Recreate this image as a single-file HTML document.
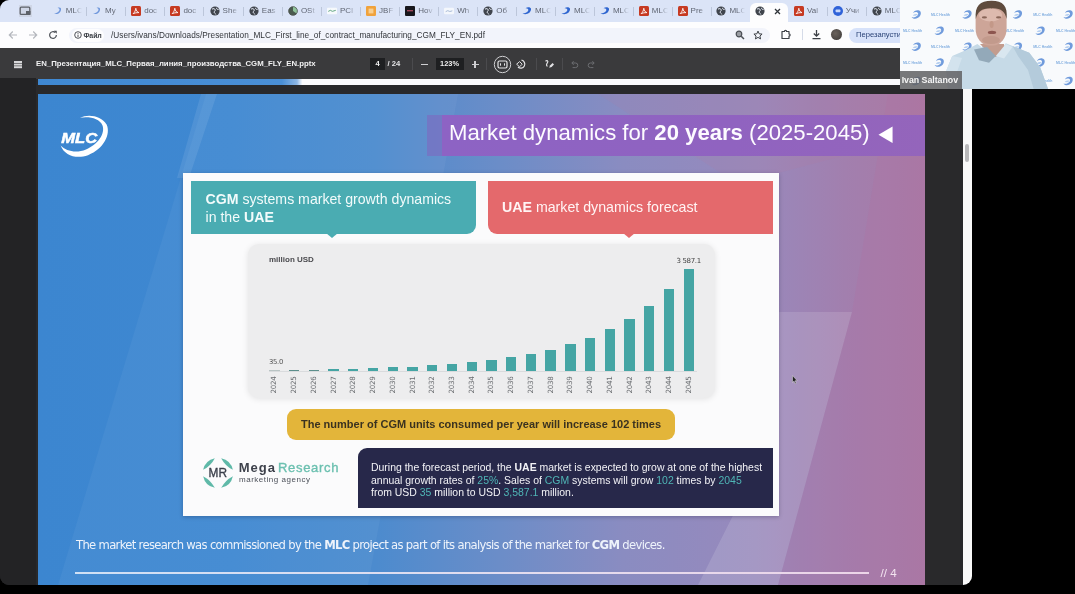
<!DOCTYPE html>
<html lang="en">
<head>
<meta charset="utf-8">
<title>Market dynamics for 20 years</title>
<style>
*{box-sizing:border-box;margin:0;padding:0}
html,body{width:1075px;height:594px;overflow:hidden;background:#000;font-family:"Liberation Sans",sans-serif}
#root{position:relative;width:1075px;height:594px;overflow:hidden;background:#000}
.a{position:absolute}
#win{filter:blur(.5px);position:absolute;left:0;top:0;width:972px;height:585px;background:#29292b;border-radius:9px 0 9px 9px;overflow:hidden}
#tabbar{position:absolute;left:0;top:0;width:972px;height:22px;background:#dbe4f7}
#addr{position:absolute;left:0;top:22px;width:972px;height:26px;background:#fdfdfe}
#pdfbar{position:absolute;left:0;top:48.2px;width:972px;height:30.6px;background:#3a3a3c}
.tab{position:absolute;top:0;height:22px;width:39px}
.tab .ico{position:absolute;left:-5px;top:6px;width:10px;height:10px}
.tab .lbl{position:absolute;left:8px;top:5.5px;font-size:8px;line-height:10px;color:#5f6572;width:16px;overflow:hidden;white-space:nowrap;-webkit-mask-image:linear-gradient(90deg,#000 50%,transparent 100%);mask-image:linear-gradient(90deg,#000 50%,transparent 100%)}
.tab .sep{position:absolute;left:28px;top:7px;width:1px;height:9px;background:#bcc6da}
#slide{position:absolute;left:38px;top:94px;width:887px;height:491px;overflow:hidden;background:linear-gradient(90deg,#3c86d0 0%,#3f88d1 22%,#4c8bce 38%,#6b8dc8 52%,#8a8cc1 66%,#9889bc 81%,#a27fae 91%,#a87aa6 100%)}
#card{position:absolute;left:145px;top:79px;width:596px;height:343px;background:#fbfbfc;box-shadow:0 1px 4px rgba(0,0,30,.25)}
.w{color:#fff}

#cam{filter:blur(.5px);position:absolute;left:899.7px;top:0;width:175.3px;height:88.7px;background:#f8fafc;overflow:hidden}
.yr{overflow:visible}
.yr span{position:absolute;left:10px;top:9px;transform:translate(-50%,-50%) rotate(-90deg);font-size:7.2px;line-height:8px;color:#6a6d71;white-space:nowrap;font-family:"DejaVu Sans","Liberation Sans",sans-serif;letter-spacing:-.3px}
i.t{font-style:normal;color:#4fb6b6}
</style>
</head>
<body>
<div id="root">
<div id="win">
<div id="tabbar">
<svg class="a" style="left:19px;top:5px;width:13px;height:12px" viewBox="0 0 13 12"><rect x="0" y="0" width="25" height="12" rx="4" fill="#cfd6e6" transform="translate(-6 0)"/><rect x="1.2" y="2.2" width="9.6" height="7.2" rx="1" fill="none" stroke="#5d6168" stroke-width="1.3"/><rect x="7" y="6" width="4.5" height="4" fill="#5d6168"/></svg>
<div class="tab" style="left:57.8px"><svg class="ico" viewBox="0 0 10 10"><path d="M1 7.5C4 9 8.5 7 8 2.5C7.5 1.5 6 1.2 4.5 2C6.5 2 7 3.5 6 5C5 6.5 3 7.5 1 7.5Z" fill="#6f97dc"/></svg><div class="lbl">MLC</div><div class="sep"></div></div>
<div class="tab" style="left:97.0px"><svg class="ico" viewBox="0 0 10 10"><path d="M1 7.5C4 9 8.5 7 8 2.5C7.5 1.5 6 1.2 4.5 2C6.5 2 7 3.5 6 5C5 6.5 3 7.5 1 7.5Z" fill="#6f97dc"/></svg><div class="lbl">My</div><div class="sep"></div></div>
<div class="tab" style="left:136.2px"><svg class="ico" viewBox="0 0 10 10"><rect x="0" y="0" width="10" height="10" rx="1.5" fill="#c63a22"/><path d="M2.2 7.6C3.6 6.4 4.6 4.4 4.8 2.3C5.2 4.6 6.2 6 7.9 6.6C5.8 6.5 3.8 6.9 2.2 7.6Z" fill="none" stroke="#fff" stroke-width="0.9"/></svg><div class="lbl">doc</div><div class="sep"></div></div>
<div class="tab" style="left:175.4px"><svg class="ico" viewBox="0 0 10 10"><rect x="0" y="0" width="10" height="10" rx="1.5" fill="#c63a22"/><path d="M2.2 7.6C3.6 6.4 4.6 4.4 4.8 2.3C5.2 4.6 6.2 6 7.9 6.6C5.8 6.5 3.8 6.9 2.2 7.6Z" fill="none" stroke="#fff" stroke-width="0.9"/></svg><div class="lbl">doc</div><div class="sep"></div></div>
<div class="tab" style="left:214.6px"><svg class="ico" viewBox="0 0 10 10"><circle cx="5" cy="5" r="4.6" fill="#40454d"/><path d="M2 3.2C3.5 2.2 4.8 2.6 5.2 3.8C5.5 5 4 5.2 4.2 6.4C4.4 7.4 5.6 7.2 5.8 8.4" fill="none" stroke="#e8edf7" stroke-width="1"/><path d="M6.6 1.8C6.2 3 7.4 3.6 8.6 3.4" fill="none" stroke="#e8edf7" stroke-width="1"/></svg><div class="lbl">She</div><div class="sep"></div></div>
<div class="tab" style="left:253.8px"><svg class="ico" viewBox="0 0 10 10"><circle cx="5" cy="5" r="4.6" fill="#40454d"/><path d="M2 3.2C3.5 2.2 4.8 2.6 5.2 3.8C5.5 5 4 5.2 4.2 6.4C4.4 7.4 5.6 7.2 5.8 8.4" fill="none" stroke="#e8edf7" stroke-width="1"/><path d="M6.6 1.8C6.2 3 7.4 3.6 8.6 3.4" fill="none" stroke="#e8edf7" stroke-width="1"/></svg><div class="lbl">Eas</div><div class="sep"></div></div>
<div class="tab" style="left:292.9px"><svg class="ico" viewBox="0 0 10 10"><circle cx="5" cy="5" r="4.6" fill="#4a5a4e"/><path d="M5 5L5 0.6A4.4 4.4 0 0 1 8.6 7.4Z" fill="#8fc39a"/><circle cx="5" cy="5" r="4.3" fill="none" stroke="#555" stroke-width=".6"/></svg><div class="lbl">OSt</div><div class="sep"></div></div>
<div class="tab" style="left:332.0px"><svg class="ico" viewBox="0 0 12 10"><rect x="0" y="1" width="12" height="8" rx="1" fill="#f6f9fc"/><path d="M1.5 5.5L4 4.2L6.5 5.4L10.5 4.2" stroke="#5aa27a" stroke-width="1.1" fill="none"/></svg><div class="lbl">PCI</div><div class="sep"></div></div>
<div class="tab" style="left:371.1px"><svg class="ico" viewBox="0 0 10 10"><rect x="0" y="0" width="10" height="10" rx="1.2" fill="#f0a23c"/><rect x="2.6" y="2.6" width="4.8" height="4.8" fill="#f9cf8e"/></svg><div class="lbl">JBF</div><div class="sep"></div></div>
<div class="tab" style="left:410.2px"><svg class="ico" viewBox="0 0 10 10"><rect x="0" y="0" width="10" height="10" rx="1" fill="#17171c"/><rect x="2" y="4" width="6" height="1.4" fill="#a0485a"/></svg><div class="lbl">Hov</div><div class="sep"></div></div>
<div class="tab" style="left:449.2px"><svg class="ico" viewBox="0 0 12 10"><rect x="0" y="1" width="12" height="8" rx="1.5" fill="#f4f7fc"/><path d="M2 5.8L4.5 4.6L7 5.6L10 4.8" stroke="#9ab0d0" stroke-width="1" fill="none"/></svg><div class="lbl">Wh</div><div class="sep"></div></div>
<div class="tab" style="left:488.2px"><svg class="ico" viewBox="0 0 10 10"><circle cx="5" cy="5" r="4.6" fill="#40454d"/><path d="M2 3.2C3.5 2.2 4.8 2.6 5.2 3.8C5.5 5 4 5.2 4.2 6.4C4.4 7.4 5.6 7.2 5.8 8.4" fill="none" stroke="#e8edf7" stroke-width="1"/><path d="M6.6 1.8C6.2 3 7.4 3.6 8.6 3.4" fill="none" stroke="#e8edf7" stroke-width="1"/></svg><div class="lbl">Об</div><div class="sep"></div></div>
<div class="tab" style="left:527.1px"><svg class="ico" viewBox="0 0 10 10"><path d="M0.5 7.5C4 9.5 9.5 7 9 2.5C8 1 5.5 0.8 3.5 2.2C6 2 7 3.5 6 5C5 6.5 3 7.5 0.5 7.5Z" fill="#2f66d0"/></svg><div class="lbl">MLC</div><div class="sep"></div></div>
<div class="tab" style="left:566.0px"><svg class="ico" viewBox="0 0 10 10"><path d="M0.5 7.5C4 9.5 9.5 7 9 2.5C8 1 5.5 0.8 3.5 2.2C6 2 7 3.5 6 5C5 6.5 3 7.5 0.5 7.5Z" fill="#2f66d0"/></svg><div class="lbl">MLC</div><div class="sep"></div></div>
<div class="tab" style="left:604.9px"><svg class="ico" viewBox="0 0 10 10"><path d="M0.5 7.5C4 9.5 9.5 7 9 2.5C8 1 5.5 0.8 3.5 2.2C6 2 7 3.5 6 5C5 6.5 3 7.5 0.5 7.5Z" fill="#2f66d0"/></svg><div class="lbl">MLC</div><div class="sep"></div></div>
<div class="tab" style="left:643.8px"><svg class="ico" viewBox="0 0 10 10"><rect x="0" y="0" width="10" height="10" rx="1.5" fill="#c63a22"/><path d="M2.2 7.6C3.6 6.4 4.6 4.4 4.8 2.3C5.2 4.6 6.2 6 7.9 6.6C5.8 6.5 3.8 6.9 2.2 7.6Z" fill="none" stroke="#fff" stroke-width="0.9"/></svg><div class="lbl">MLC</div><div class="sep"></div></div>
<div class="tab" style="left:682.6px"><svg class="ico" viewBox="0 0 10 10"><rect x="0" y="0" width="10" height="10" rx="1.5" fill="#c63a22"/><path d="M2.2 7.6C3.6 6.4 4.6 4.4 4.8 2.3C5.2 4.6 6.2 6 7.9 6.6C5.8 6.5 3.8 6.9 2.2 7.6Z" fill="none" stroke="#fff" stroke-width="0.9"/></svg><div class="lbl">Pre</div><div class="sep"></div></div>
<div class="tab" style="left:721.4px"><svg class="ico" viewBox="0 0 10 10"><circle cx="5" cy="5" r="4.6" fill="#40454d"/><path d="M2 3.2C3.5 2.2 4.8 2.6 5.2 3.8C5.5 5 4 5.2 4.2 6.4C4.4 7.4 5.6 7.2 5.8 8.4" fill="none" stroke="#e8edf7" stroke-width="1"/><path d="M6.6 1.8C6.2 3 7.4 3.6 8.6 3.4" fill="none" stroke="#e8edf7" stroke-width="1"/></svg><div class="lbl">MLC</div></div>
<div class="a" style="left:750.2px;top:2.5px;width:38px;height:20px;background:#fdfdfe;border-radius:6px 6px 0 0"></div>
<div class="tab" style="left:760.2px"><svg class="ico" viewBox="0 0 10 10"><circle cx="5" cy="5" r="4.6" fill="#40454d"/><path d="M2 3.2C3.5 2.2 4.8 2.6 5.2 3.8C5.5 5 4 5.2 4.2 6.4C4.4 7.4 5.6 7.2 5.8 8.4" fill="none" stroke="#e8edf7" stroke-width="1"/><path d="M6.6 1.8C6.2 3 7.4 3.6 8.6 3.4" fill="none" stroke="#e8edf7" stroke-width="1"/></svg><svg class="a" style="left:13.5px;top:7.5px;width:7px;height:7px" viewBox="0 0 7 7"><path d="M1 1L6 6M6 1L1 6" stroke="#30343a" stroke-width="1.3"/></svg></div>
<div class="tab" style="left:799.0px"><svg class="ico" viewBox="0 0 10 10"><rect x="0" y="0" width="10" height="10" rx="1.5" fill="#c63a22"/><path d="M2.2 7.6C3.6 6.4 4.6 4.4 4.8 2.3C5.2 4.6 6.2 6 7.9 6.6C5.8 6.5 3.8 6.9 2.2 7.6Z" fill="none" stroke="#fff" stroke-width="0.9"/></svg><div class="lbl">Val</div><div class="sep"></div></div>
<div class="tab" style="left:837.8px"><svg class="ico" viewBox="0 0 10 10"><circle cx="5" cy="5" r="5" fill="#2f62d8"/><rect x="2.6" y="3.6" width="4.8" height="2.6" rx=".6" fill="#c9d8fa"/></svg><div class="lbl">Учи</div><div class="sep"></div></div>
<div class="tab" style="left:876.8px"><svg class="ico" viewBox="0 0 10 10"><circle cx="5" cy="5" r="4.6" fill="#40454d"/><path d="M2 3.2C3.5 2.2 4.8 2.6 5.2 3.8C5.5 5 4 5.2 4.2 6.4C4.4 7.4 5.6 7.2 5.8 8.4" fill="none" stroke="#e8edf7" stroke-width="1"/><path d="M6.6 1.8C6.2 3 7.4 3.6 8.6 3.4" fill="none" stroke="#e8edf7" stroke-width="1"/></svg><div class="lbl">MLC</div><div class="sep"></div></div>
</div>
<div id="addr">
<svg class="a" style="left:8px;top:8px;width:10px;height:10px" viewBox="0 0 10 10"><path d="M9 5H1.5M4.8 1.5L1.3 5L4.8 8.5" fill="none" stroke="#b5b8be" stroke-width="1.2"/></svg>
<svg class="a" style="left:28px;top:8px;width:10px;height:10px" viewBox="0 0 10 10"><path d="M1 5H8.5M5.2 1.5L8.7 5L5.2 8.5" fill="none" stroke="#b5b8be" stroke-width="1.2"/></svg>
<svg class="a" style="left:48px;top:8px;width:10px;height:10px" viewBox="0 0 11 11"><path d="M9.2 5.5A3.7 3.7 0 1 1 7.9 2.7" fill="none" stroke="#4b4f55" stroke-width="1.3"/><path d="M6.4 0.8H9.6V4Z" fill="#4b4f55"/></svg>
<div class="a" style="left:69px;top:5.5px;width:701px;height:15px;border-radius:8px;background:#f2f4fb"></div>
<div class="a" style="left:72px;top:6.5px;width:32px;height:13px;border-radius:7px;background:#fdfdfe"></div>
<svg class="a" style="left:73.5px;top:9px;width:8px;height:8px" viewBox="0 0 8 8"><circle cx="4" cy="4" r="3.3" fill="none" stroke="#3c4046" stroke-width=".9"/><path d="M4 3.6V6M4 2V2.8" stroke="#3c4046" stroke-width=".9"/></svg>
<div class="a" style="left:83.5px;top:8.5px;font-size:7px;line-height:9px;font-weight:bold;color:#3c4046;letter-spacing:-.1px">Файл</div>
<div class="a" id="url" style="left:111px;top:7.5px;font-size:8.25px;line-height:11px;color:#33363b;white-space:nowrap;letter-spacing:.02px">/Users/ivans/Downloads/Presentation_MLC_First_line_of_contract_manufacturing_CGM_FLY_EN.pdf</div>
<svg class="a" style="left:735px;top:8px;width:10px;height:10px" viewBox="0 0 10 10"><circle cx="4" cy="4" r="2.8" fill="#9a9da3" stroke="#4b4f55" stroke-width="1.2"/><path d="M6.2 6.2L9 9" stroke="#4b4f55" stroke-width="1.5"/></svg>
<svg class="a" style="left:752.8px;top:7.8px;width:10px;height:10px" viewBox="0 0 11 11"><path d="M5.5 1.2L6.8 4.2L10 4.5L7.6 6.6L8.3 9.8L5.5 8.1L2.7 9.8L3.4 6.6L1 4.5L4.2 4.2Z" fill="none" stroke="#3c4046" stroke-width="1.1" stroke-linejoin="round"/></svg>
<svg class="a" style="left:780px;top:7px;width:11px;height:11px" viewBox="0 0 11 11"><path d="M2 2.5H4.5C4.3 1 6.7 1 6.5 2.5H9V5C10.4 4.8 10.4 7.2 9 7V9.5H2Z" fill="none" stroke="#3c4046" stroke-width="1.2" stroke-linejoin="round"/></svg>
<div class="a" style="left:802px;top:7px;width:1px;height:11px;background:#d5dbe8"></div>
<svg class="a" style="left:811px;top:7px;width:11px;height:11px" viewBox="0 0 11 11"><path d="M5.5 1V7M2.8 4.5L5.5 7.2L8.2 4.5M1.5 9.6H9.5" fill="none" stroke="#3c4046" stroke-width="1.3"/></svg>
<div class="a" style="left:830.5px;top:7px;width:11px;height:11px;border-radius:50%;background:radial-gradient(circle at 40% 40%,#6a625c,#3c3937)"></div>
<div class="a" style="left:849px;top:5.5px;width:80px;height:15px;border-radius:8px;background:#d7e2fa"></div>
<div class="a" style="left:856px;top:8px;font-size:7.6px;line-height:10px;color:#2b4377;white-space:nowrap">Перезапустить</div>
</div>
<div id="pdfbar"><div class="a" style="left:0;top:1.3px;width:972px;height:30px">
<div class="a" style="left:14px;top:12px;width:8px;height:1.4px;background:#d8d8da;box-shadow:0 2.6px 0 #d8d8da,0 5.2px 0 #d8d8da"></div>
<div class="a w" id="ptitle" style="left:36px;top:10px;font-size:7.79px;line-height:10px;font-weight:bold;color:#f1f1f2;white-space:nowrap">EN_Презентация_MLC_Первая_линия_производства_CGM_FLY_EN.pptx</div>
<div class="a" style="left:370px;top:9px;width:15px;height:12px;background:#1e1f21"></div>
<div class="a w" style="left:370px;top:10px;width:15px;text-align:center;font-size:7.6px;line-height:10px;font-weight:bold;color:#eee">4</div>
<div class="a w" style="left:387.5px;top:10px;font-size:7.6px;line-height:10px;font-weight:bold;color:#e4e4e6;white-space:nowrap">/ 24</div>
<div class="a" style="left:412px;top:9px;width:1px;height:12px;background:#4b4b4e"></div>
<div class="a" style="left:421px;top:14.4px;width:7px;height:1.2px;background:#cfcfd2"></div>
<div class="a" style="left:435.5px;top:9px;width:28px;height:12px;background:#1e1f21"></div>
<div class="a w" style="left:435.5px;top:10px;width:28px;text-align:center;font-size:7.4px;line-height:10px;font-weight:bold;color:#eee">123%</div>
<div class="a" style="left:471.5px;top:14.4px;width:7px;height:1.2px;background:#cfcfd2"></div><div class="a" style="left:474.4px;top:11.5px;width:1.2px;height:7px;background:#cfcfd2"></div>
<div class="a" style="left:486px;top:9px;width:1px;height:12px;background:#4b4b4e"></div>
<svg class="a" style="left:492.5px;top:5.5px;width:19px;height:19px" viewBox="0 0 19 19"><circle cx="9.5" cy="9.5" r="8.2" fill="none" stroke="#cfcfd2" stroke-width="1"/><rect x="5" y="6" width="9" height="7" rx="1.4" fill="none" stroke="#e4e4e6" stroke-width="1.2"/><path d="M7.5 8.3V10.7M11.5 8.3V10.7" stroke="#e4e4e6" stroke-width="1"/></svg>
<svg class="a" style="left:514.5px;top:9px;width:12px;height:12px" viewBox="0 0 12 12"><path d="M6.5 2.2A4 4 0 1 1 3 9" fill="none" stroke="#e0e0e2" stroke-width="1.2"/><path d="M4.6 3.6L1.6 6.2L4.6 8.8L7.2 6.2Z" fill="none" stroke="#e0e0e2" stroke-width="1"/></svg>
<div class="a" style="left:536px;top:9px;width:1px;height:12px;background:#4b4b4e"></div>
<svg class="a" style="left:544px;top:9.5px;width:11px;height:11px" viewBox="0 0 11 11"><path d="M1.5 2.2C3 .8 4.6 2 3.4 3.8C2.4 5.4 2 7 3.6 7.2" fill="none" stroke="#e2e2e4" stroke-width="1.2"/><path d="M5.2 8.8L6 6.4L8.6 4L10 5.4L7.6 8Z" fill="#e2e2e4"/></svg>
<div class="a" style="left:562px;top:9px;width:1px;height:12px;background:#4b4b4e"></div>
<svg class="a" style="left:570px;top:10.5px;width:9px;height:9px" viewBox="0 0 9 9"><path d="M2 3H5.5A2.2 2.2 0 0 1 5.5 7.6H2.6M3.6 1.2L1.8 3L3.6 4.8" fill="none" stroke="#6d6e72" stroke-width="1"/></svg>
<svg class="a" style="left:587px;top:10.5px;width:9px;height:9px" viewBox="0 0 9 9"><path d="M7 3H3.5A2.2 2.2 0 0 0 3.5 7.6H6.4M5.4 1.2L7.2 3L5.4 4.8" fill="none" stroke="#6d6e72" stroke-width="1"/></svg>
</div></div>
<div class="a" style="left:0;top:78px;width:36px;height:507px;background:#232325"></div>
<div class="a" style="left:38px;top:79.2px;width:887px;height:5.5px;background:linear-gradient(90deg,#3f88d2 0,#4a8fd6 27.5%,#8db6e4 29.2%,#fbfbfd 29.8%)"></div>
<div class="a" style="left:962.5px;top:78px;width:9.5px;height:507px;background:#fafafa"></div>
<div class="a" style="left:964.5px;top:143.5px;width:4.6px;height:18.5px;border-radius:2px;background:#b9b9bb"></div>
<div id="slide">
<svg class="a" style="left:0;top:0;width:887px;height:491px" viewBox="0 0 887 491" preserveAspectRatio="none"><polygon points="168,0 420,0 330,491 20,491" fill="#fff" opacity=".045"/><polygon points="163,0 179,0 151,84 139,84" fill="#fff" opacity=".09"/><polygon points="850,0 887,0 887,491 740,491 814,218" fill="#b26c9e" opacity=".2"/><polygon points="741,218 814,218 740,491 660,491 741,330" fill="#fff" opacity=".13"/><polygon points="560,0 887,0 887,40 700,90" fill="#c07890" opacity=".10"/></svg>
<svg class="a" style="left:20px;top:18px;width:54px;height:48px" viewBox="0 0 54 48"><path d="M22 5.8C30 1.6 43.5 3.6 48.6 12.6C53 22 46 37 30 43.2C18 47.4 6.5 43.4 2.6 33.4C8 39 18 41.5 28 37.4C40 32.4 47.6 21.6 44.4 13.2C41.4 6.4 31 4 22 5.8Z" fill="#fff"/><text x="3.2" y="31" font-family="Liberation Sans, sans-serif" font-size="14.6" font-weight="bold" font-style="italic" fill="#fff" stroke="#fff" stroke-width=".5" textLength="36" lengthAdjust="spacingAndGlyphs">MLC</text></svg>
<div class="a" style="left:388.5px;top:21.1px;width:15.5px;height:41.4px;background:#7476c4;opacity:.9"></div>
<div class="a" style="left:403.8px;top:21.1px;width:484px;height:41.4px;background:linear-gradient(90deg,#8d63c4,#9063c0 60%,#9465bb)"></div>
<div class="a w" id="title" style="left:411px;top:25px;font-size:22.14px;line-height:27px;white-space:nowrap;color:#fdfbff">Market dynamics for <b>20 years</b> (2025-2045)</div>
<svg class="a" style="left:840.3px;top:31.5px;width:15px;height:17.5px" viewBox="0 0 16 18" preserveAspectRatio="none"><path d="M15.5 .5V17.5L.5 9Z" fill="#fff"/></svg>
<div id="card">
<div class="a" style="left:7.5px;top:8px;width:285px;height:52.5px;background:#4aacb2;border-radius:0 0 9px 0"></div>
<div class="a" style="left:143px;top:60px;width:0;height:0;border-left:6px solid transparent;border-right:6px solid transparent;border-top:5.5px solid #4aacb2"></div>
<div class="a w" id="t1" style="left:22.5px;top:18px;font-size:14.13px;line-height:17.5px;white-space:nowrap;color:#f2fbfb"><b>CGM</b> systems market growth dynamics<br>in the <b>UAE</b></div>
<div class="a" style="left:304.5px;top:8px;width:285px;height:52.5px;background:#e4696c;border-radius:0 0 0 9px"></div>
<div class="a" style="left:440px;top:60px;width:0;height:0;border-left:6px solid transparent;border-right:6px solid transparent;border-top:5.5px solid #e4696c"></div>
<div class="a w" id="t2" style="left:319px;top:26px;font-size:14.2px;line-height:17.5px;white-space:nowrap;color:#fff4f4"><b>UAE</b> market dynamics forecast</div>
<div class="a" style="left:64.5px;top:70.5px;width:467.5px;height:154px;border-radius:11px;background:#ededee;box-shadow:0 1px 6px rgba(0,0,0,.10)"></div>
<div class="a" style="left:86px;top:82px;font-size:8px;line-height:10px;font-weight:bold;color:#4a4a4e;white-space:nowrap">million USD</div>
<div class="a" style="left:86px;top:185.3px;font-size:6.8px;line-height:9px;color:#555;white-space:nowrap;font-family:'DejaVu Sans','Liberation Sans',sans-serif;letter-spacing:-.3px">35.0</div>
<div class="a" style="left:493.5px;top:83.5px;font-size:7px;line-height:9px;color:#444;white-space:nowrap;font-family:'DejaVu Sans','Liberation Sans',sans-serif;letter-spacing:-.35px">3 587.1</div>
<div class="a" style="left:86px;top:197.8px;width:428px;height:1px;background:#d9dbdd"></div>
<div class="a" style="left:86.2px;top:197.1px;width:10.4px;height:0.9px;background:#b9c4c4"></div>
<div class="a yr" style="left:81.4px;top:203px;width:20px;height:17px"><span>2024</span></div>
<div class="a" style="left:105.9px;top:196.8px;width:10.4px;height:1.2px;background:#5d8f8c"></div>
<div class="a yr" style="left:101.1px;top:203px;width:20px;height:17px"><span>2025</span></div>
<div class="a" style="left:125.7px;top:196.5px;width:10.4px;height:1.5px;background:#5d8f8c"></div>
<div class="a yr" style="left:120.9px;top:203px;width:20px;height:17px"><span>2026</span></div>
<div class="a" style="left:145.4px;top:196.2px;width:10.4px;height:1.8px;background:#45a5a4"></div>
<div class="a yr" style="left:140.6px;top:203px;width:20px;height:17px"><span>2027</span></div>
<div class="a" style="left:165.1px;top:195.7px;width:10.4px;height:2.3px;background:#45a5a4"></div>
<div class="a yr" style="left:160.3px;top:203px;width:20px;height:17px"><span>2028</span></div>
<div class="a" style="left:184.9px;top:195.1px;width:10.4px;height:2.9px;background:#45a5a4"></div>
<div class="a yr" style="left:180.1px;top:203px;width:20px;height:17px"><span>2029</span></div>
<div class="a" style="left:204.6px;top:194.4px;width:10.4px;height:3.6px;background:#45a5a4"></div>
<div class="a yr" style="left:199.8px;top:203px;width:20px;height:17px"><span>2030</span></div>
<div class="a" style="left:224.3px;top:193.5px;width:10.4px;height:4.5px;background:#45a5a4"></div>
<div class="a yr" style="left:219.5px;top:203px;width:20px;height:17px"><span>2031</span></div>
<div class="a" style="left:244.0px;top:192.4px;width:10.4px;height:5.6px;background:#45a5a4"></div>
<div class="a yr" style="left:239.2px;top:203px;width:20px;height:17px"><span>2032</span></div>
<div class="a" style="left:263.8px;top:191.0px;width:10.4px;height:7.0px;background:#45a5a4"></div>
<div class="a yr" style="left:259.0px;top:203px;width:20px;height:17px"><span>2033</span></div>
<div class="a" style="left:283.5px;top:189.2px;width:10.4px;height:8.8px;background:#45a5a4"></div>
<div class="a yr" style="left:278.7px;top:203px;width:20px;height:17px"><span>2034</span></div>
<div class="a" style="left:303.2px;top:187.0px;width:10.4px;height:11.0px;background:#45a5a4"></div>
<div class="a yr" style="left:298.4px;top:203px;width:20px;height:17px"><span>2035</span></div>
<div class="a" style="left:323.0px;top:184.3px;width:10.4px;height:13.7px;background:#45a5a4"></div>
<div class="a yr" style="left:318.2px;top:203px;width:20px;height:17px"><span>2036</span></div>
<div class="a" style="left:342.7px;top:180.9px;width:10.4px;height:17.1px;background:#45a5a4"></div>
<div class="a yr" style="left:337.9px;top:203px;width:20px;height:17px"><span>2037</span></div>
<div class="a" style="left:362.4px;top:176.6px;width:10.4px;height:21.4px;background:#45a5a4"></div>
<div class="a yr" style="left:357.6px;top:203px;width:20px;height:17px"><span>2038</span></div>
<div class="a" style="left:382.2px;top:171.2px;width:10.4px;height:26.8px;background:#45a5a4"></div>
<div class="a yr" style="left:377.4px;top:203px;width:20px;height:17px"><span>2039</span></div>
<div class="a" style="left:401.9px;top:164.5px;width:10.4px;height:33.5px;background:#45a5a4"></div>
<div class="a yr" style="left:397.1px;top:203px;width:20px;height:17px"><span>2040</span></div>
<div class="a" style="left:421.6px;top:156.1px;width:10.4px;height:41.9px;background:#45a5a4"></div>
<div class="a yr" style="left:416.8px;top:203px;width:20px;height:17px"><span>2041</span></div>
<div class="a" style="left:441.3px;top:145.7px;width:10.4px;height:52.3px;background:#45a5a4"></div>
<div class="a yr" style="left:436.5px;top:203px;width:20px;height:17px"><span>2042</span></div>
<div class="a" style="left:461.1px;top:132.6px;width:10.4px;height:65.4px;background:#45a5a4"></div>
<div class="a yr" style="left:456.3px;top:203px;width:20px;height:17px"><span>2043</span></div>
<div class="a" style="left:480.8px;top:116.2px;width:10.4px;height:81.8px;background:#45a5a4"></div>
<div class="a yr" style="left:476.0px;top:203px;width:20px;height:17px"><span>2044</span></div>
<div class="a" style="left:500.5px;top:95.8px;width:10.4px;height:102.2px;background:#45a5a4"></div>
<div class="a yr" style="left:495.7px;top:203px;width:20px;height:17px"><span>2045</span></div>
<div class="a" style="left:104px;top:236px;width:388px;height:30.5px;border-radius:9px;background:#e3b53a"></div>
<div class="a" id="yb" style="left:118px;top:245px;font-size:11.0px;line-height:13px;font-weight:bold;color:#3a3220;white-space:nowrap">The number of CGM units consumed per year will increase 102 times</div>
<svg class="a" style="left:17.6px;top:282.9px;width:34px;height:34px" viewBox="0 0 34 34"><g fill="#5fb9a8"><path d="M31.87 20.16A15.2 15.2 0 0 1 20.16 31.87Q24.21 24.21 31.87 20.16Z"/><path d="M13.84 31.87A15.2 15.2 0 0 1 2.13 20.16Q9.79 24.21 13.84 31.87Z"/><path d="M2.13 13.84A15.2 15.2 0 0 1 13.84 2.13Q9.79 9.79 2.13 13.84Z"/><path d="M20.16 2.13A15.2 15.2 0 0 1 31.87 13.84Q24.21 9.79 20.16 2.13Z"/></g><text x="7.6" y="21.2" font-family="Liberation Sans, sans-serif" font-size="13" fill="#3a3f4a" stroke="#3a3f4a" stroke-width=".35" textLength="18.4" lengthAdjust="spacingAndGlyphs">MR</text></svg>
<div class="a" id="mega" style="left:55.8px;top:286.9px;font-size:13px;line-height:15px;color:#3d414b;white-space:nowrap"><span style="font-weight:bold;letter-spacing:.95px">Mega</span><span style="color:#6cc0b0;margin-left:2.2px;letter-spacing:.68px;-webkit-text-stroke:.35px #6cc0b0">Research</span></div>
<div class="a" id="mka" style="left:56px;top:301.8px;font-size:8px;line-height:10px;color:#4d515a;white-space:nowrap;letter-spacing:.52px">marketing agency</div>
<div class="a" style="left:175px;top:275px;width:414.5px;height:60px;background:#27284a;border-radius:9px 0 0 0"></div>
<div class="a w" id="dk" style="left:188px;top:289.3px;font-size:10.46px;line-height:12.6px;color:#f2f2f6;white-space:nowrap">During the forecast period, the <b>UAE</b> market is expected to grow at one of the highest<br>annual growth rates of <i class="t">25%</i>. Sales of <i class="t">CGM</i> systems will grow <i class="t">102</i> times by <i class="t">2045</i><br>from USD <i class="t">35</i> million to USD <i class="t">3,587.1</i> million.</div>
</div>
<div class="a w" id="ft" style="left:38px;top:443.5px;font-size:11.6px;line-height:14px;color:#eef3fb;white-space:nowrap;font-family:'DejaVu Sans','Liberation Sans',sans-serif;letter-spacing:-.68px">The market research was commissioned by the <b>MLC</b> project as part of its analysis of the market for <b>CGM</b> devices.</div>
<div class="a" style="left:37px;top:477.5px;width:794px;height:2px;background:linear-gradient(90deg,#cfe0f5,#e4dcee 60%,#ecd4e8)"></div>
<div class="a w" style="left:842.5px;top:471.7px;font-size:11.6px;line-height:13px;color:#f3e4f0;white-space:nowrap">// 4</div>
</div>
</div>
<div id="cam">
<svg class="a" style="left:0;top:0;width:175.5px;height:88.7px" viewBox="0 0 175.5 88.7"><defs><filter id="bl" x="-10%" y="-10%" width="120%" height="120%"><feGaussianBlur stdDeviation=".7"/></filter><filter id="bl2"><feGaussianBlur stdDeviation=".45"/></filter></defs><g filter="url(#bl2)"><g transform="translate(16.2 14.7)"><path d="M-4.6 2.2C-3.6 4.6 1.2 4.8 3.6 1.6C5.6 -1.2 4.6 -4 2.2 -4.4C-.2 -4.8 -2.6 -3.4 -3.2 -1.6C-1.6 -3 1 -3.2 1.8 -1.6C2.6 0 .6 2.2 -1.8 2.6C-3 2.8 -4 2.6 -4.6 2.2Z" fill="#6f9bdc"/><path d="M-3.4 .6C-2 -.6 .4 -1 1.6 -.4C.8 1 -1.6 1.6 -3.4 .6Z" fill="#b5cff0"/></g><g transform="translate(67.0 14.7)"><path d="M-4.6 2.2C-3.6 4.6 1.2 4.8 3.6 1.6C5.6 -1.2 4.6 -4 2.2 -4.4C-.2 -4.8 -2.6 -3.4 -3.2 -1.6C-1.6 -3 1 -3.2 1.8 -1.6C2.6 0 .6 2.2 -1.8 2.6C-3 2.8 -4 2.6 -4.6 2.2Z" fill="#6f9bdc"/><path d="M-3.4 .6C-2 -.6 .4 -1 1.6 -.4C.8 1 -1.6 1.6 -3.4 .6Z" fill="#b5cff0"/></g><g transform="translate(117.4 14.7)"><path d="M-4.6 2.2C-3.6 4.6 1.2 4.8 3.6 1.6C5.6 -1.2 4.6 -4 2.2 -4.4C-.2 -4.8 -2.6 -3.4 -3.2 -1.6C-1.6 -3 1 -3.2 1.8 -1.6C2.6 0 .6 2.2 -1.8 2.6C-3 2.8 -4 2.6 -4.6 2.2Z" fill="#6f9bdc"/><path d="M-3.4 .6C-2 -.6 .4 -1 1.6 -.4C.8 1 -1.6 1.6 -3.4 .6Z" fill="#b5cff0"/></g><g transform="translate(168.1 14.7)"><path d="M-4.6 2.2C-3.6 4.6 1.2 4.8 3.6 1.6C5.6 -1.2 4.6 -4 2.2 -4.4C-.2 -4.8 -2.6 -3.4 -3.2 -1.6C-1.6 -3 1 -3.2 1.8 -1.6C2.6 0 .6 2.2 -1.8 2.6C-3 2.8 -4 2.6 -4.6 2.2Z" fill="#6f9bdc"/><path d="M-3.4 .6C-2 -.6 .4 -1 1.6 -.4C.8 1 -1.6 1.6 -3.4 .6Z" fill="#b5cff0"/></g><text x="40.4" y="15.9" font-size="3.7" font-weight="bold" fill="#82aee0" font-family="Liberation Sans, sans-serif" text-anchor="middle" textLength="19" lengthAdjust="spacingAndGlyphs">MLC Health</text><text x="91.6" y="15.9" font-size="3.7" font-weight="bold" fill="#82aee0" font-family="Liberation Sans, sans-serif" text-anchor="middle" textLength="19" lengthAdjust="spacingAndGlyphs">MLC Health</text><text x="142.8" y="15.9" font-size="3.7" font-weight="bold" fill="#82aee0" font-family="Liberation Sans, sans-serif" text-anchor="middle" textLength="19" lengthAdjust="spacingAndGlyphs">MLC Health</text><g transform="translate(16.2 46.9)"><path d="M-4.6 2.2C-3.6 4.6 1.2 4.8 3.6 1.6C5.6 -1.2 4.6 -4 2.2 -4.4C-.2 -4.8 -2.6 -3.4 -3.2 -1.6C-1.6 -3 1 -3.2 1.8 -1.6C2.6 0 .6 2.2 -1.8 2.6C-3 2.8 -4 2.6 -4.6 2.2Z" fill="#6f9bdc"/><path d="M-3.4 .6C-2 -.6 .4 -1 1.6 -.4C.8 1 -1.6 1.6 -3.4 .6Z" fill="#b5cff0"/></g><g transform="translate(67.0 46.9)"><path d="M-4.6 2.2C-3.6 4.6 1.2 4.8 3.6 1.6C5.6 -1.2 4.6 -4 2.2 -4.4C-.2 -4.8 -2.6 -3.4 -3.2 -1.6C-1.6 -3 1 -3.2 1.8 -1.6C2.6 0 .6 2.2 -1.8 2.6C-3 2.8 -4 2.6 -4.6 2.2Z" fill="#6f9bdc"/><path d="M-3.4 .6C-2 -.6 .4 -1 1.6 -.4C.8 1 -1.6 1.6 -3.4 .6Z" fill="#b5cff0"/></g><g transform="translate(117.4 46.9)"><path d="M-4.6 2.2C-3.6 4.6 1.2 4.8 3.6 1.6C5.6 -1.2 4.6 -4 2.2 -4.4C-.2 -4.8 -2.6 -3.4 -3.2 -1.6C-1.6 -3 1 -3.2 1.8 -1.6C2.6 0 .6 2.2 -1.8 2.6C-3 2.8 -4 2.6 -4.6 2.2Z" fill="#6f9bdc"/><path d="M-3.4 .6C-2 -.6 .4 -1 1.6 -.4C.8 1 -1.6 1.6 -3.4 .6Z" fill="#b5cff0"/></g><g transform="translate(168.1 46.9)"><path d="M-4.6 2.2C-3.6 4.6 1.2 4.8 3.6 1.6C5.6 -1.2 4.6 -4 2.2 -4.4C-.2 -4.8 -2.6 -3.4 -3.2 -1.6C-1.6 -3 1 -3.2 1.8 -1.6C2.6 0 .6 2.2 -1.8 2.6C-3 2.8 -4 2.6 -4.6 2.2Z" fill="#6f9bdc"/><path d="M-3.4 .6C-2 -.6 .4 -1 1.6 -.4C.8 1 -1.6 1.6 -3.4 .6Z" fill="#b5cff0"/></g><text x="40.4" y="48.1" font-size="3.7" font-weight="bold" fill="#82aee0" font-family="Liberation Sans, sans-serif" text-anchor="middle" textLength="19" lengthAdjust="spacingAndGlyphs">MLC Health</text><text x="91.6" y="48.1" font-size="3.7" font-weight="bold" fill="#82aee0" font-family="Liberation Sans, sans-serif" text-anchor="middle" textLength="19" lengthAdjust="spacingAndGlyphs">MLC Health</text><text x="142.8" y="48.1" font-size="3.7" font-weight="bold" fill="#82aee0" font-family="Liberation Sans, sans-serif" text-anchor="middle" textLength="19" lengthAdjust="spacingAndGlyphs">MLC Health</text><g transform="translate(16.2 81.2)"><path d="M-4.6 2.2C-3.6 4.6 1.2 4.8 3.6 1.6C5.6 -1.2 4.6 -4 2.2 -4.4C-.2 -4.8 -2.6 -3.4 -3.2 -1.6C-1.6 -3 1 -3.2 1.8 -1.6C2.6 0 .6 2.2 -1.8 2.6C-3 2.8 -4 2.6 -4.6 2.2Z" fill="#6f9bdc"/><path d="M-3.4 .6C-2 -.6 .4 -1 1.6 -.4C.8 1 -1.6 1.6 -3.4 .6Z" fill="#b5cff0"/></g><g transform="translate(67.0 81.2)"><path d="M-4.6 2.2C-3.6 4.6 1.2 4.8 3.6 1.6C5.6 -1.2 4.6 -4 2.2 -4.4C-.2 -4.8 -2.6 -3.4 -3.2 -1.6C-1.6 -3 1 -3.2 1.8 -1.6C2.6 0 .6 2.2 -1.8 2.6C-3 2.8 -4 2.6 -4.6 2.2Z" fill="#6f9bdc"/><path d="M-3.4 .6C-2 -.6 .4 -1 1.6 -.4C.8 1 -1.6 1.6 -3.4 .6Z" fill="#b5cff0"/></g><g transform="translate(117.4 81.2)"><path d="M-4.6 2.2C-3.6 4.6 1.2 4.8 3.6 1.6C5.6 -1.2 4.6 -4 2.2 -4.4C-.2 -4.8 -2.6 -3.4 -3.2 -1.6C-1.6 -3 1 -3.2 1.8 -1.6C2.6 0 .6 2.2 -1.8 2.6C-3 2.8 -4 2.6 -4.6 2.2Z" fill="#6f9bdc"/><path d="M-3.4 .6C-2 -.6 .4 -1 1.6 -.4C.8 1 -1.6 1.6 -3.4 .6Z" fill="#b5cff0"/></g><g transform="translate(168.1 81.2)"><path d="M-4.6 2.2C-3.6 4.6 1.2 4.8 3.6 1.6C5.6 -1.2 4.6 -4 2.2 -4.4C-.2 -4.8 -2.6 -3.4 -3.2 -1.6C-1.6 -3 1 -3.2 1.8 -1.6C2.6 0 .6 2.2 -1.8 2.6C-3 2.8 -4 2.6 -4.6 2.2Z" fill="#6f9bdc"/><path d="M-3.4 .6C-2 -.6 .4 -1 1.6 -.4C.8 1 -1.6 1.6 -3.4 .6Z" fill="#b5cff0"/></g><text x="40.4" y="82.4" font-size="3.7" font-weight="bold" fill="#82aee0" font-family="Liberation Sans, sans-serif" text-anchor="middle" textLength="19" lengthAdjust="spacingAndGlyphs">MLC Health</text><text x="91.6" y="82.4" font-size="3.7" font-weight="bold" fill="#82aee0" font-family="Liberation Sans, sans-serif" text-anchor="middle" textLength="19" lengthAdjust="spacingAndGlyphs">MLC Health</text><text x="142.8" y="82.4" font-size="3.7" font-weight="bold" fill="#82aee0" font-family="Liberation Sans, sans-serif" text-anchor="middle" textLength="19" lengthAdjust="spacingAndGlyphs">MLC Health</text><g transform="translate(-11.4 31.0)"><path d="M-4.6 2.2C-3.6 4.6 1.2 4.8 3.6 1.6C5.6 -1.2 4.6 -4 2.2 -4.4C-.2 -4.8 -2.6 -3.4 -3.2 -1.6C-1.6 -3 1 -3.2 1.8 -1.6C2.6 0 .6 2.2 -1.8 2.6C-3 2.8 -4 2.6 -4.6 2.2Z" fill="#6f9bdc"/><path d="M-3.4 .6C-2 -.6 .4 -1 1.6 -.4C.8 1 -1.6 1.6 -3.4 .6Z" fill="#b5cff0"/></g><g transform="translate(39.2 31.0)"><path d="M-4.6 2.2C-3.6 4.6 1.2 4.8 3.6 1.6C5.6 -1.2 4.6 -4 2.2 -4.4C-.2 -4.8 -2.6 -3.4 -3.2 -1.6C-1.6 -3 1 -3.2 1.8 -1.6C2.6 0 .6 2.2 -1.8 2.6C-3 2.8 -4 2.6 -4.6 2.2Z" fill="#6f9bdc"/><path d="M-3.4 .6C-2 -.6 .4 -1 1.6 -.4C.8 1 -1.6 1.6 -3.4 .6Z" fill="#b5cff0"/></g><g transform="translate(89.8 31.0)"><path d="M-4.6 2.2C-3.6 4.6 1.2 4.8 3.6 1.6C5.6 -1.2 4.6 -4 2.2 -4.4C-.2 -4.8 -2.6 -3.4 -3.2 -1.6C-1.6 -3 1 -3.2 1.8 -1.6C2.6 0 .6 2.2 -1.8 2.6C-3 2.8 -4 2.6 -4.6 2.2Z" fill="#6f9bdc"/><path d="M-3.4 .6C-2 -.6 .4 -1 1.6 -.4C.8 1 -1.6 1.6 -3.4 .6Z" fill="#b5cff0"/></g><g transform="translate(140.1 31.0)"><path d="M-4.6 2.2C-3.6 4.6 1.2 4.8 3.6 1.6C5.6 -1.2 4.6 -4 2.2 -4.4C-.2 -4.8 -2.6 -3.4 -3.2 -1.6C-1.6 -3 1 -3.2 1.8 -1.6C2.6 0 .6 2.2 -1.8 2.6C-3 2.8 -4 2.6 -4.6 2.2Z" fill="#6f9bdc"/><path d="M-3.4 .6C-2 -.6 .4 -1 1.6 -.4C.8 1 -1.6 1.6 -3.4 .6Z" fill="#b5cff0"/></g><text x="12.5" y="32.2" font-size="3.7" font-weight="bold" fill="#82aee0" font-family="Liberation Sans, sans-serif" text-anchor="middle" textLength="19" lengthAdjust="spacingAndGlyphs">MLC Health</text><text x="64.4" y="32.2" font-size="3.7" font-weight="bold" fill="#82aee0" font-family="Liberation Sans, sans-serif" text-anchor="middle" textLength="19" lengthAdjust="spacingAndGlyphs">MLC Health</text><text x="114.6" y="32.2" font-size="3.7" font-weight="bold" fill="#82aee0" font-family="Liberation Sans, sans-serif" text-anchor="middle" textLength="19" lengthAdjust="spacingAndGlyphs">MLC Health</text><text x="165.6" y="32.2" font-size="3.7" font-weight="bold" fill="#82aee0" font-family="Liberation Sans, sans-serif" text-anchor="middle" textLength="19" lengthAdjust="spacingAndGlyphs">MLC Health</text><g transform="translate(-11.4 62.8)"><path d="M-4.6 2.2C-3.6 4.6 1.2 4.8 3.6 1.6C5.6 -1.2 4.6 -4 2.2 -4.4C-.2 -4.8 -2.6 -3.4 -3.2 -1.6C-1.6 -3 1 -3.2 1.8 -1.6C2.6 0 .6 2.2 -1.8 2.6C-3 2.8 -4 2.6 -4.6 2.2Z" fill="#6f9bdc"/><path d="M-3.4 .6C-2 -.6 .4 -1 1.6 -.4C.8 1 -1.6 1.6 -3.4 .6Z" fill="#b5cff0"/></g><g transform="translate(39.2 62.8)"><path d="M-4.6 2.2C-3.6 4.6 1.2 4.8 3.6 1.6C5.6 -1.2 4.6 -4 2.2 -4.4C-.2 -4.8 -2.6 -3.4 -3.2 -1.6C-1.6 -3 1 -3.2 1.8 -1.6C2.6 0 .6 2.2 -1.8 2.6C-3 2.8 -4 2.6 -4.6 2.2Z" fill="#6f9bdc"/><path d="M-3.4 .6C-2 -.6 .4 -1 1.6 -.4C.8 1 -1.6 1.6 -3.4 .6Z" fill="#b5cff0"/></g><g transform="translate(89.8 62.8)"><path d="M-4.6 2.2C-3.6 4.6 1.2 4.8 3.6 1.6C5.6 -1.2 4.6 -4 2.2 -4.4C-.2 -4.8 -2.6 -3.4 -3.2 -1.6C-1.6 -3 1 -3.2 1.8 -1.6C2.6 0 .6 2.2 -1.8 2.6C-3 2.8 -4 2.6 -4.6 2.2Z" fill="#6f9bdc"/><path d="M-3.4 .6C-2 -.6 .4 -1 1.6 -.4C.8 1 -1.6 1.6 -3.4 .6Z" fill="#b5cff0"/></g><g transform="translate(140.1 62.8)"><path d="M-4.6 2.2C-3.6 4.6 1.2 4.8 3.6 1.6C5.6 -1.2 4.6 -4 2.2 -4.4C-.2 -4.8 -2.6 -3.4 -3.2 -1.6C-1.6 -3 1 -3.2 1.8 -1.6C2.6 0 .6 2.2 -1.8 2.6C-3 2.8 -4 2.6 -4.6 2.2Z" fill="#6f9bdc"/><path d="M-3.4 .6C-2 -.6 .4 -1 1.6 -.4C.8 1 -1.6 1.6 -3.4 .6Z" fill="#b5cff0"/></g><text x="12.5" y="64.0" font-size="3.7" font-weight="bold" fill="#82aee0" font-family="Liberation Sans, sans-serif" text-anchor="middle" textLength="19" lengthAdjust="spacingAndGlyphs">MLC Health</text><text x="64.4" y="64.0" font-size="3.7" font-weight="bold" fill="#82aee0" font-family="Liberation Sans, sans-serif" text-anchor="middle" textLength="19" lengthAdjust="spacingAndGlyphs">MLC Health</text><text x="114.6" y="64.0" font-size="3.7" font-weight="bold" fill="#82aee0" font-family="Liberation Sans, sans-serif" text-anchor="middle" textLength="19" lengthAdjust="spacingAndGlyphs">MLC Health</text><text x="165.6" y="64.0" font-size="3.7" font-weight="bold" fill="#82aee0" font-family="Liberation Sans, sans-serif" text-anchor="middle" textLength="19" lengthAdjust="spacingAndGlyphs">MLC Health</text></g><g filter="url(#bl)"><polygon points="77.4,43.9 65.6,50.2 52.2,56.1 46.4,70.3 48,90 148.5,90 140.1,67 129.3,52.7 112.5,46 105.8,43.2 95.8,55.3 85.7,50.2" fill="#c6dae7"/><polygon points="112.5,46 129.3,52.7 140.1,67 148.5,90 134,90 128,70 118,56" fill="#b4cbdb"/><polygon points="52.2,56.1 46.4,70.3 48,90 58,90 57,72 62,58" fill="#d3e3ee"/><polygon points="80,44 104,44 104,50 95.8,57 86,50" fill="#c39c8e"/><polygon points="74,49.6 87,47 95.8,56.1 89.1,62.8 79,60.3" fill="#93a9b9"/><polygon points="95.8,56.1 105.8,43.9 112.5,46.9 104.1,58.6" fill="#d9e7f0"/><rect x="75.6" y="3" width="31" height="42.4" rx="13.5" ry="17" fill="#cda598"/><ellipse cx="90.5" cy="15" rx="11.5" ry="6.5" fill="#ddbaae"/><path d="M75.8 19C74.5 6 80 .8 91.5 .8C103 .8 108 6 106.6 19C105 11.5 101 8 91.5 8.4C82 8 77.5 12 75.8 19Z" fill="#5e4b3e"/><ellipse cx="84.4" cy="17.4" rx="2.6" ry="1.1" fill="#8a6659"/><ellipse cx="98.6" cy="17.4" rx="2.6" ry="1.1" fill="#8a6659"/><ellipse cx="91.6" cy="24.5" rx="2" ry="3.4" fill="#c39888"/><ellipse cx="92" cy="32.4" rx="4.2" ry="1.7" fill="#8d5650"/><ellipse cx="91" cy="40" rx="9" ry="4" fill="#c29a8c"/></g></svg>
<div class="a" style="left:0;top:71.3px;width:62.5px;height:17.4px;background:rgba(98,98,100,.86)"></div>
<div class="a w" style="left:2px;top:75.2px;font-size:8.85px;line-height:10px;font-weight:bold;color:#f6f6f6;white-space:nowrap;letter-spacing:-.05px">Ivan Saltanov</div>
</div>
<svg class="a" style="left:792px;top:374.5px;width:6px;height:9.5px" viewBox="0 0 7 10" preserveAspectRatio="none"><path d="M.6 .6V8L2.4 6.4L3.6 9.2L4.8 8.7L3.6 6L6 6Z" fill="#222" stroke="#eee" stroke-width=".5"/></svg>
</div>
</body>
</html>
